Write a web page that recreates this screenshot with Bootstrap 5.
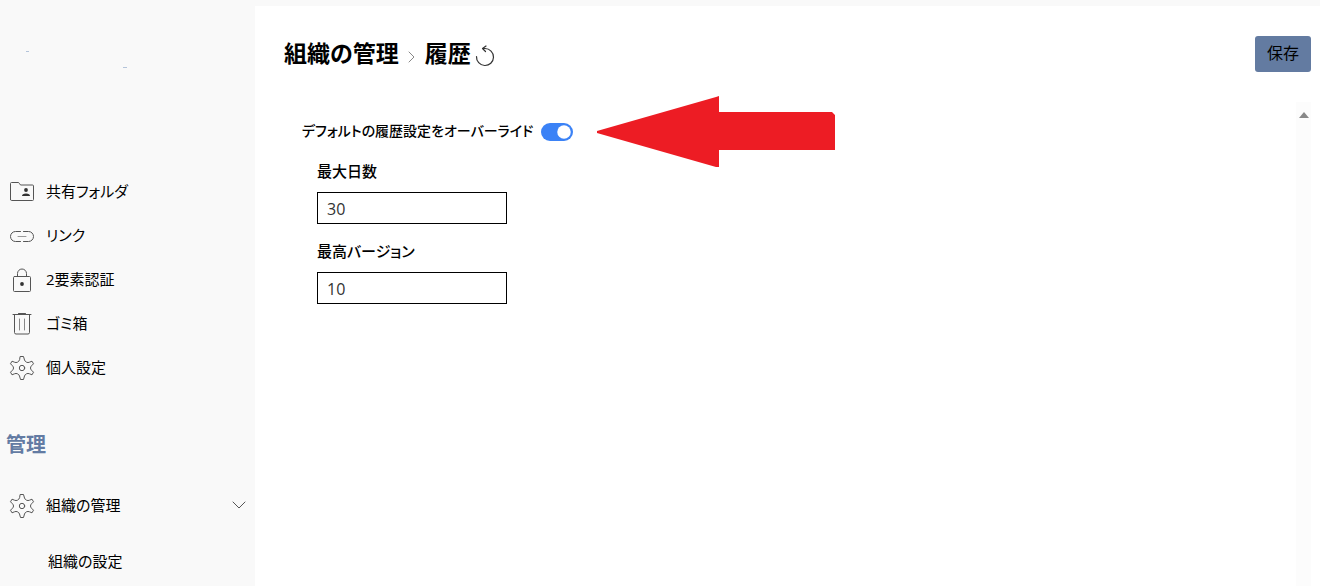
<!DOCTYPE html>
<html lang="ja">
<head>
<meta charset="utf-8">
<meta name="viewport" content="width=device-width, initial-scale=1">
<title>組織の管理 - 履歴</title>
<link href="https://cdn.jsdelivr.net/npm/bootstrap@5.3.0/dist/css/bootstrap.min.css" rel="stylesheet">
<style>
body { font-family: "Open Sans", "Noto Sans CJK JP", sans-serif; font-feature-settings: "palt"; font-size: 16px; line-height: 24px; color: #000; background: #f9f9f9; }
.app-shell { height: 100vh; }
.side-pane { width: 254px; }
.side-logo { height: 169px; }
.logo-speck { left: 26px; top: 51px; color: #b4c4da; }
.side-pane a { color: #000; height: 44px; font-size: 15px; }
.side-heading { font-size: 20px; line-height: 28px; font-weight: 700; color: #637ba3; margin: 42px 0 24px; padding-left: 6px; }
.side-pane .side-sub { height: 68px; padding-left: 48px; }
.line-icon { fill: none; stroke: #555; stroke-width: 1; stroke-linejoin: round; stroke-linecap: round; flex: none; }
.nav-icon { margin: 2px 10px 0 8px; }
.main-pane { background: #fff; margin-top: 6px; margin-left: 1px; }
.page-head { padding: 30px 9px 30px 29px; }
.crumbs { font-size: 23px; line-height: 34px; font-weight: 700; }
.crumbs a { color: #000; }
.btn-save { --bs-btn-bg: #637ba1; --bs-btn-color: #000; --bs-btn-hover-bg: #566d92; --bs-btn-active-bg: #4d6388; width: 56px; height: 36px; border-radius: 3px; padding: 0 0 2px; border: 0; }
.settings-area { padding: 0 0 0 46px; }
.settings-area label { font-weight: 500; font-size: 15px; line-height: 24px; }
.settings-area .switch-row label { font-size: 14px; padding-left: 1px; }
.switch-row .form-check-input { width: 32px; height: 18px; border: 0; margin: 2px 0 0 8px; box-shadow: none; }
.form-check-input:checked { background-color: #3b82f6; }
.value-box.form-control { width: 190px; height: 32px; border: 1px solid #000; border-radius: 0; color: #333; padding: 2px 9px 0; }
.field-label { margin-bottom: 9px; }
.field-group { margin-top: 15px; }
.scroll-rail { width: 15px; margin-right: 9px; background: #fcfcfc; padding-top: 10px; }
.rail-btn { border: 0; background: none; padding: 0; height: 6px; line-height: 0; }
.callout { margin: -22px 0 -24px 24px; }
</style>
</head>
<body>
<div class="app-shell d-flex overflow-hidden">
  <nav class="side-pane flex-shrink-0 d-flex flex-column">
    <div class="side-logo position-relative flex-shrink-0">
      <svg class="logo-speck position-absolute" width="102" height="18" fill="currentColor"><rect width="3" height="1"/><rect x="97" y="16" width="4" height="1"/></svg>
    </div>
    <a href="#" class="d-flex align-items-center text-decoration-none flex-shrink-0"><svg class="line-icon nav-icon" width="28" height="28" viewBox="0 0 28 28"><path d="M2.500 21.500v-16q0-1 1-1h6.500q1 0 1.500 1l1 1.500h12q1 0 1 1v13.500q0 1-1 1h-21q-1 0-1-1z"/><circle cx="18" cy="12" r="1.900" fill="#333" stroke="none"/><path d="M14 18q0-2.500 4-2.500t4 2.500z" fill="#333" stroke="none"/></svg>共有フォルダ</a>
    <a href="#" class="d-flex align-items-center text-decoration-none flex-shrink-0"><svg class="line-icon nav-icon" width="28" height="28" viewBox="0 0 28 28"><path d="M12.500 9.500h-5a5 5 0 0 0 0 10h5M15.500 9.500h5a5 5 0 0 1 0 10h-5"/><path d="M10 14.500h8" stroke="#999"/></svg>リンク</a>
    <a href="#" class="d-flex align-items-center text-decoration-none flex-shrink-0"><svg class="line-icon nav-icon" width="28" height="28" viewBox="0 0 28 28"><rect x="5.500" y="10.500" width="17" height="15" rx="1"/><path d="M9.500 10.500v-3a4.500 4.500 0 0 1 9 0v3"/><circle cx="14" cy="18" r="1.900" fill="#333" stroke="none"/></svg>2要素認証</a>
    <a href="#" class="d-flex align-items-center text-decoration-none flex-shrink-0"><svg class="line-icon nav-icon" width="28" height="28" viewBox="0 0 28 28"><path d="M5 4.500h18M10.500 3.500h7M6.500 4.500v18q0 1.500 1.500 1.500h12q1.500 0 1.500-1.500v-18"/><path d="M11.500 9v11M16.500 9v11" stroke="#888"/></svg>ゴミ箱</a>
    <a href="#" class="d-flex align-items-center text-decoration-none flex-shrink-0"><svg class="line-icon nav-icon" width="28" height="28" viewBox="0 0 28 28"><g id="gear"><path d="M12.500 2.500h3l1 3.500q.5 1.500 2 2.200t3 0l2.500-1 1.500 2.600-2 2q-1 1-1 2.200t1 2.200l2 2-1.500 2.600-2.500-1q-1.500-.7-3 0t-2 2.200l-1 3.500h-3l-1-3.500q-.5-1.500-2-2.200t-3 0l-2.500 1-1.500-2.600 2-2q1-1 1-2.200t-1-2.200l-2-2L4 7.200l2.500 1q1.500.7 3 0t2-2.200z"/><circle cx="14" cy="14" r="2.700"/></g></svg>個人設定</a>
    <h2 class="side-heading">管理</h2>
    <a href="#" class="d-flex align-items-center text-decoration-none flex-shrink-0"><svg class="line-icon nav-icon" width="28" height="28" viewBox="0 0 28 28"><use href="#gear"/></svg>組織の管理<svg class="line-icon ms-auto me-2" width="14" height="8"><path d="M1 1l6 6 6-6"/></svg></a>
    <a href="#" class="side-sub d-flex align-items-center text-decoration-none flex-shrink-0">組織の設定</a>
  </nav>
  <main class="main-pane flex-grow-1 d-flex flex-column">
    <header class="page-head d-flex justify-content-between align-items-start">
      <h1 class="crumbs d-flex align-items-center mb-0"><a href="#" class="text-decoration-none">組織の管理</a><svg class="line-icon mx-2 mt-2" width="10" height="12"><path d="M2 1l5 5-5 5" stroke="#888"/></svg>履歴<button type="button" class="btn p-0 border-0 d-flex mt-2 ms-1" aria-label="元に戻す"><svg class="line-icon" width="22" height="24" viewBox="0 0 22 24"><path d="M1.500 11.500a8.500 8.500 0 1 0 8.500-8H8M11 1L7.500 3.500l3 3" stroke="#333" stroke-width="1.200"/></svg></button></h1>
      <button type="button" class="btn btn-save">保存</button>
    </header>
    <div class="d-flex flex-grow-1">
      <form class="settings-area flex-grow-1">
        <div class="switch-row d-flex align-items-center form-switch p-0 mt-3">
          <label for="override">デフォルトの履歴設定をオーバーライド</label>
          <input class="form-check-input" type="checkbox" role="switch" id="override" checked>
          <svg class="callout" width="238" height="72" viewBox="0 0 238 72"><path d="M0 35L119 1l3-1v16h113l3 3v35H122v17h-3L0 37z" fill="#ed1c24"/></svg>
        </div>
        <div class="field-group ps-3"><label class="field-label d-block" for="days">最大日数</label><input class="form-control value-box" id="days" type="text" value="30"></div>
        <div class="field-group ps-3"><label class="field-label d-block" for="versions">最高バージョン</label><input class="form-control value-box" id="versions" type="text" value="10"></div>
      </form>
      <div class="scroll-rail d-flex align-items-start justify-content-center"><button type="button" class="rail-btn" aria-label="上へスクロール"><svg width="10" height="6"><path d="M0 6l5-6 5 6z" fill="#888"/></svg></button></div>
    </div>
  </main>
</div>
<script src="https://cdn.jsdelivr.net/npm/bootstrap@5.3.0/dist/js/bootstrap.bundle.min.js"></script>
</body>
</html>
